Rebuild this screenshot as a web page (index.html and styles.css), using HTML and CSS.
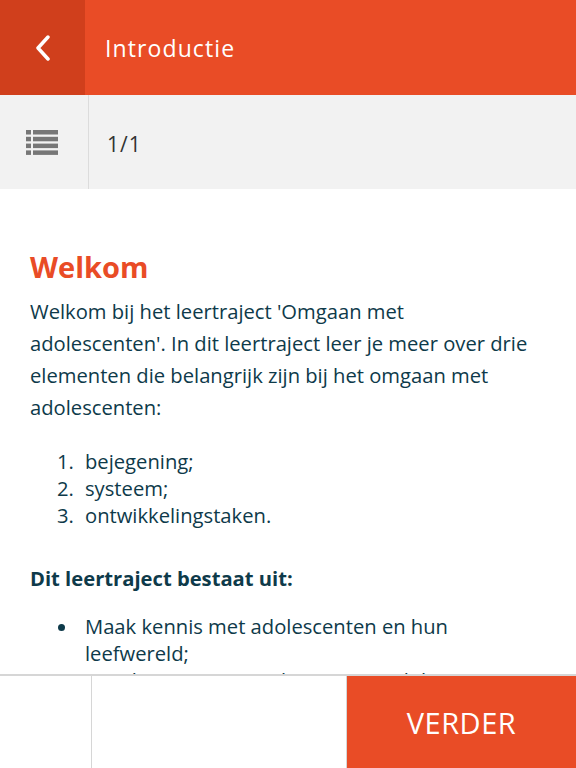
FILE: index.html
```html
<!DOCTYPE html>
<html lang="nl">
<head>
    <meta charset="UTF-8">
    <meta name="viewport" content="width=device-width, initial-scale=1.0">
    <title>Introductie</title>
    <link rel="stylesheet" href="styles.css">
</head>
<body>
    <div class="app">
        <header class="topbar">
            <a class="back" href="#">
                <svg width="16" height="26" viewBox="0 0 16 26"><path d="M13 2 L3 13 L13 24" fill="none" stroke="#fff" stroke-width="3.5" stroke-linecap="round" stroke-linejoin="round"/></svg>
            </a>
            <h1 class="title">Introductie</h1>
        </header>

        <div class="subbar">
            <div class="toc">
                <svg width="32" height="26" viewBox="0 0 32 26">
                    <g fill="#777">
                        <rect x="0" y="1" width="5" height="4.5"/>
                        <rect x="7" y="1" width="25" height="4.5"/>
                        <rect x="0" y="7.8" width="5" height="4.5"/>
                        <rect x="7" y="7.8" width="25" height="4.5"/>
                        <rect x="0" y="14.6" width="5" height="4.5"/>
                        <rect x="7" y="14.6" width="25" height="4.5"/>
                        <rect x="0" y="21.4" width="5" height="4.5"/>
                        <rect x="7" y="21.4" width="25" height="4.5"/>
                    </g>
                </svg>
            </div>
            <div class="pager">1/1</div>
        </div>

        <main class="content">
            <h2>Welkom</h2>
            <p>Welkom bij het leertraject 'Omgaan met adolescenten'. In dit leertraject leer je meer over drie elementen die belangrijk zijn bij het omgaan met adolescenten:</p>
            <ol>
                <li>bejegening;</li>
                <li>systeem;</li>
                <li>ontwikkelingstaken.</li>
            </ol>
            <h3>Dit leertraject bestaat uit:</h3>
            <ul>
                <li>Maak kennis met adolescenten en hun leefwereld;</li>
                <li>Leer hoe je in gesprek gaat met adolescenten;</li>
            </ul>
        </main>

        <footer class="bottombar">
            <div class="cell first"></div>
            <div class="cell middle"></div>
            <button class="next" type="button">VERDER</button>
        </footer>
    </div>
</body>
</html>
```

FILE: styles.css
```css
* { box-sizing: border-box; }
html, body { margin: 0; height: 100%; }
body {
    font-family: "Open Sans", "Noto Sans", sans-serif;
    color: #0e3a4a;
    background: #fff;
}
.app { display: flex; flex-direction: column; height: 100vh; }

.topbar { display: flex; height: 95px; background: #e94c26; flex-shrink: 0; }
.back { width: 85px; background: #d03f1c; display: flex; align-items: center; justify-content: center; }
.title { margin: 0 0 0 20px; align-self: center; color: #fff; font-size: 23px; font-weight: 400; letter-spacing: 1.1px; }

.subbar { display: flex; height: 94px; background: #f2f2f2; flex-shrink: 0; }
.toc { width: 89px; border-right: 1px solid #dcdcdc; display: flex; align-items: center; justify-content: center; padding-right: 4px; }
.pager { align-self: center; padding: 4px 0 0 18px; font-size: 21px; color: #333; letter-spacing: 1px; }

.content { flex: 1; overflow: hidden; padding: 58px 40px 0 30px; }
.content h2 { margin: 0 0 8px; color: #e94c26; font-size: 29px; font-weight: 700; line-height: 40px; }
.content p { margin: 0 0 25px; font-size: 20.2px; line-height: 32px; }
.content ol, .content ul { margin: 0; padding-left: 49px; font-size: 20.2px; line-height: 27px; }
.content li { padding-left: 6px; }
.content h3 { margin: 34px 0 20px; font-size: 20.2px; font-weight: 700; line-height: 30px; }

.bottombar { display: flex; height: 94px; flex-shrink: 0; border-top: 2px solid #d6d6d6; background: #fff; }
.cell { border-right: 1px solid #d6d6d6; }
.first { width: 92px; }
.middle { width: 255px; }
.next { flex: 1; border: none; background: #e94c26; color: #fff; font-family: inherit; font-size: 29px; font-weight: 400; letter-spacing: 0.5px; cursor: pointer; }
```
